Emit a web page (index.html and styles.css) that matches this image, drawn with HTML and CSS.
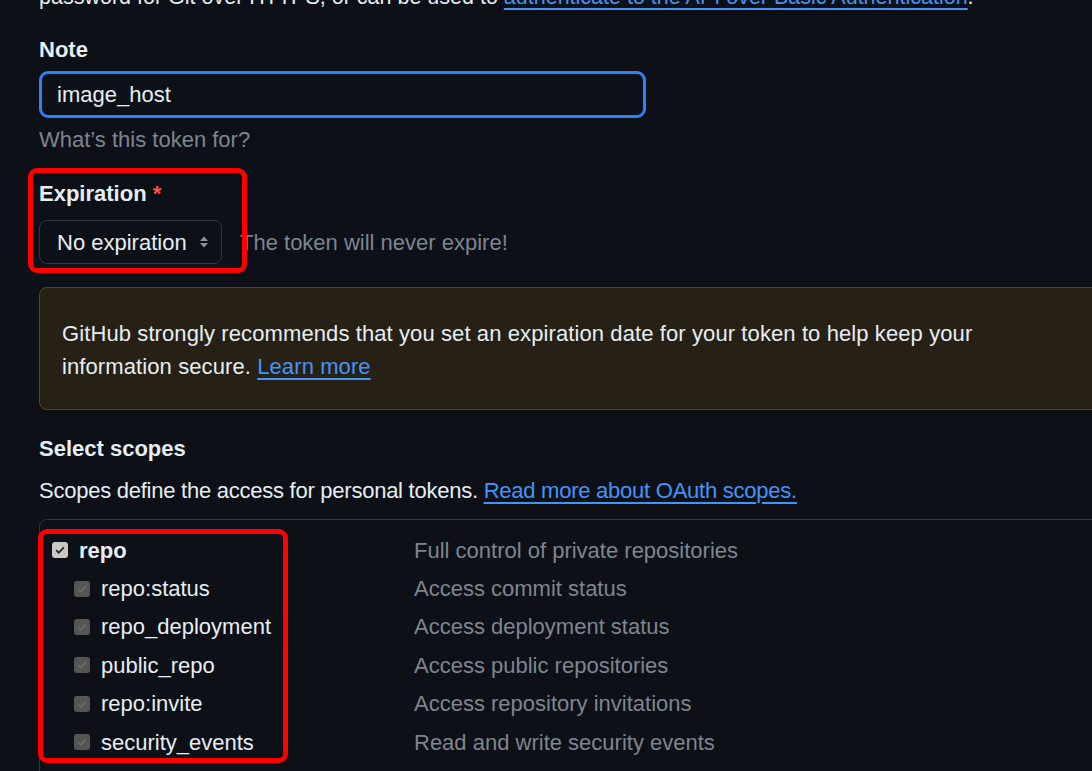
FILE: index.html
```html
<!DOCTYPE html>
<html lang="en">
<head>
<meta charset="utf-8">
<title>New personal access token</title>
<link rel="stylesheet" href="styles.css">
</head>
<body>
<div class="page">
  <p class="intro">password for Git over HTTPS, or can be used to <a href="#" class="link">authenticate to the API over Basic Authentication</a>.</p>

  <div class="group note-group">
    <label class="label">Note</label>
    <div class="input">image_host</div>
    <p class="hint">What’s this token for?</p>
  </div>

  <div class="group exp-group">
    <label class="label">Expiration <span class="req">*</span></label>
    <div class="exp-row">
      <div class="select">
        <span>No expiration</span>
        <svg class="caret" width="12" height="16" viewBox="0 0 12 16"><path d="M6 2.5 L10 7 H2 Z M6 13.5 L10 9 H2 Z" fill="#8b949e"/></svg>
      </div>
      <span class="exp-note">The token will never expire!</span>
    </div>
  </div>

  <div class="warn">
    GitHub strongly recommends that you set an expiration date for your token to help keep your information secure. <a href="#" class="link">Learn more</a>
  </div>

  <div class="group scopes-head">
    <label class="label">Select scopes</label>
    <p class="desc">Scopes define the access for personal tokens. <a href="#" class="link">Read more about OAuth scopes.</a></p>
  </div>

  <div class="scopes">
    <div class="row main">
      <span class="name"><span class="cb on"><svg width="12" height="12" viewBox="0 0 12 12"><path d="M2.2 6.2 L4.8 8.8 L9.8 3.4" stroke="#222" stroke-width="1.8" fill="none"/></svg></span><b>repo</b></span>
      <span class="what">Full control of private repositories</span>
    </div>
    <div class="row sub">
      <span class="name"><span class="cb off"><svg width="12" height="12" viewBox="0 0 12 12"><path d="M2.2 6.2 L4.8 8.8 L9.8 3.4" stroke="#6b6b6b" stroke-width="1.8" fill="none"/></svg></span>repo:status</span>
      <span class="what">Access commit status</span>
    </div>
    <div class="row sub">
      <span class="name"><span class="cb off"><svg width="12" height="12" viewBox="0 0 12 12"><path d="M2.2 6.2 L4.8 8.8 L9.8 3.4" stroke="#6b6b6b" stroke-width="1.8" fill="none"/></svg></span>repo_deployment</span>
      <span class="what">Access deployment status</span>
    </div>
    <div class="row sub">
      <span class="name"><span class="cb off"><svg width="12" height="12" viewBox="0 0 12 12"><path d="M2.2 6.2 L4.8 8.8 L9.8 3.4" stroke="#6b6b6b" stroke-width="1.8" fill="none"/></svg></span>public_repo</span>
      <span class="what">Access public repositories</span>
    </div>
    <div class="row sub">
      <span class="name"><span class="cb off"><svg width="12" height="12" viewBox="0 0 12 12"><path d="M2.2 6.2 L4.8 8.8 L9.8 3.4" stroke="#6b6b6b" stroke-width="1.8" fill="none"/></svg></span>repo:invite</span>
      <span class="what">Access repository invitations</span>
    </div>
    <div class="row sub">
      <span class="name"><span class="cb off"><svg width="12" height="12" viewBox="0 0 12 12"><path d="M2.2 6.2 L4.8 8.8 L9.8 3.4" stroke="#6b6b6b" stroke-width="1.8" fill="none"/></svg></span>security_events</span>
      <span class="what">Read and write security events</span>
    </div>
  </div>
</div>

<div class="mark mark-exp"></div>
<div class="mark mark-scopes"></div>
</body>
</html>
```

FILE: styles.css
```css
html, body {
  margin: 0;
  padding: 0;
  background: #0d1117;
  color: #e6edf3;
  font-family: "Liberation Sans", Arial, sans-serif;
  font-size: 22px;
  line-height: 33px;
  overflow: hidden;
  height: 771px;
}

.page {
  padding-left: 39px;
}

.link {
  color: #4493f8;
  text-decoration: underline;
  text-underline-offset: 4px;
}

.intro {
  margin: -19px 0 0 0;
  font-size: 21.5px;
}

.group {
  display: flex;
  flex-direction: column;
}

.label {
  font-weight: bold;
}

.req { color: #f85149; }

.note-group { margin-top: 19px; }

.input {
  margin-top: 5px;
  width: 586px;
  height: 41px;
  border: 3px solid #2f81f7;
  border-radius: 9px;
  padding-left: 15px;
  line-height: 41px;
  background: #0d1117;
}

.hint {
  margin: 5px 0 0 0;
  color: #7d8590;
}

.exp-group { margin-top: 21px; }

.exp-row {
  display: flex;
  align-items: center;
  gap: 18px;
  margin-top: 10px;
}

.select {
  width: 183px;
  height: 44px;
  box-sizing: border-box;
  border: 1px solid #30363d;
  border-radius: 8px;
  background: #0d1117;
  display: flex;
  align-items: center;
  justify-content: space-between;
  padding: 0 11px 0 17px;
}

.exp-note { color: #7d8590; }

.warn {
  margin-top: 23px;
  width: 1080px;
  box-sizing: border-box;
  padding: 29px 120px 26px 22px;
  background: #272115;
  border: 1px solid #5a4517;
  border-radius: 8px;
  letter-spacing: 0.1px;
}

.scopes-head { margin-top: 22px; }

.desc {
  margin: 9px 0 0 0;
  letter-spacing: -0.25px;
}

.scopes {
  margin-top: 12px;
  width: 1080px;
  border: 1px solid #30363d;
  border-radius: 8px;
  padding: 11px 0 20px 0;
}

.row {
  display: flex;
  height: 38.4px;
  align-items: center;
}

.name {
  display: flex;
  align-items: center;
  width: 374px;
  padding-left: 12px;
  box-sizing: border-box;
}

.sub .name { padding-left: 34px; }

.cb {
  width: 16px;
  height: 16px;
  border-radius: 3px;
  display: inline-flex;
  align-items: center;
  justify-content: center;
  margin-right: 11px;
  flex: none;
}

.cb.on { background: #c8c8c8; }
.cb.off { background: #555555; }

.what { color: #7d8590; }

.mark {
  position: absolute;
  border: 5px solid #ff0000;
  border-radius: 9px;
  box-sizing: border-box;
}

.mark-exp {
  left: 28px;
  top: 168px;
  width: 219px;
  height: 105px;
}

.mark-scopes {
  left: 38px;
  top: 529px;
  width: 250px;
  height: 234px;
}
```
